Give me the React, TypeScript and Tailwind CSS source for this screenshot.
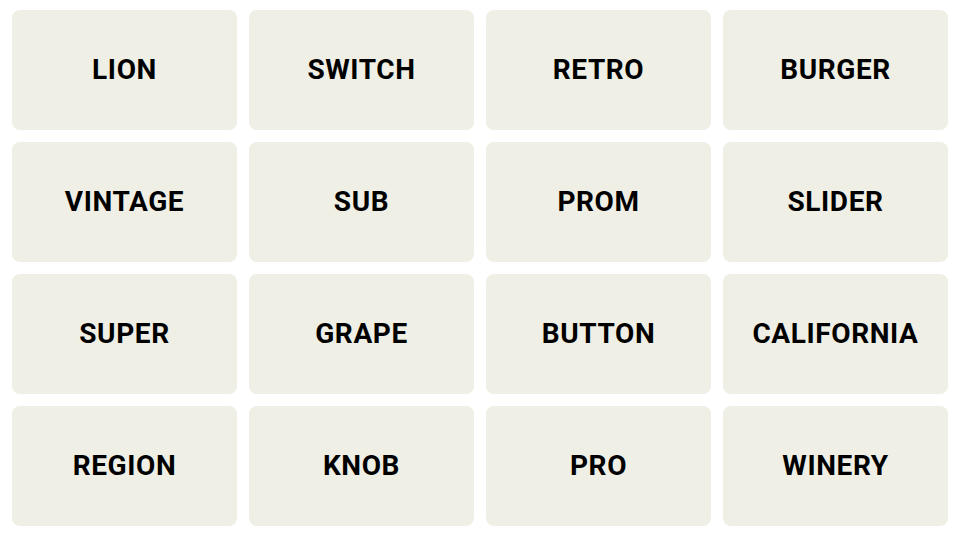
const words = [
  "LION", "SWITCH", "RETRO", "BURGER",
  "VINTAGE", "SUB", "PROM", "SLIDER",
  "SUPER", "GRAPE", "BUTTON", "CALIFORNIA",
  "REGION", "KNOB", "PRO", "WINERY",
];

export default function App() {
  return (
    <div className="min-h-screen bg-white pt-[10px] pb-[10px] pl-[12px] pr-[10px] font-['Roboto',sans-serif]">
      <div className="grid grid-cols-4 gap-[12px]">
        {words.map((w) => (
          <button
            key={w}
            className="h-[120px] rounded-[8px] bg-[#efefe6] flex items-center justify-center text-[28px] font-bold tracking-[0.6px] text-black"
          >
            {w}
          </button>
        ))}
      </div>
    </div>
  );
}
